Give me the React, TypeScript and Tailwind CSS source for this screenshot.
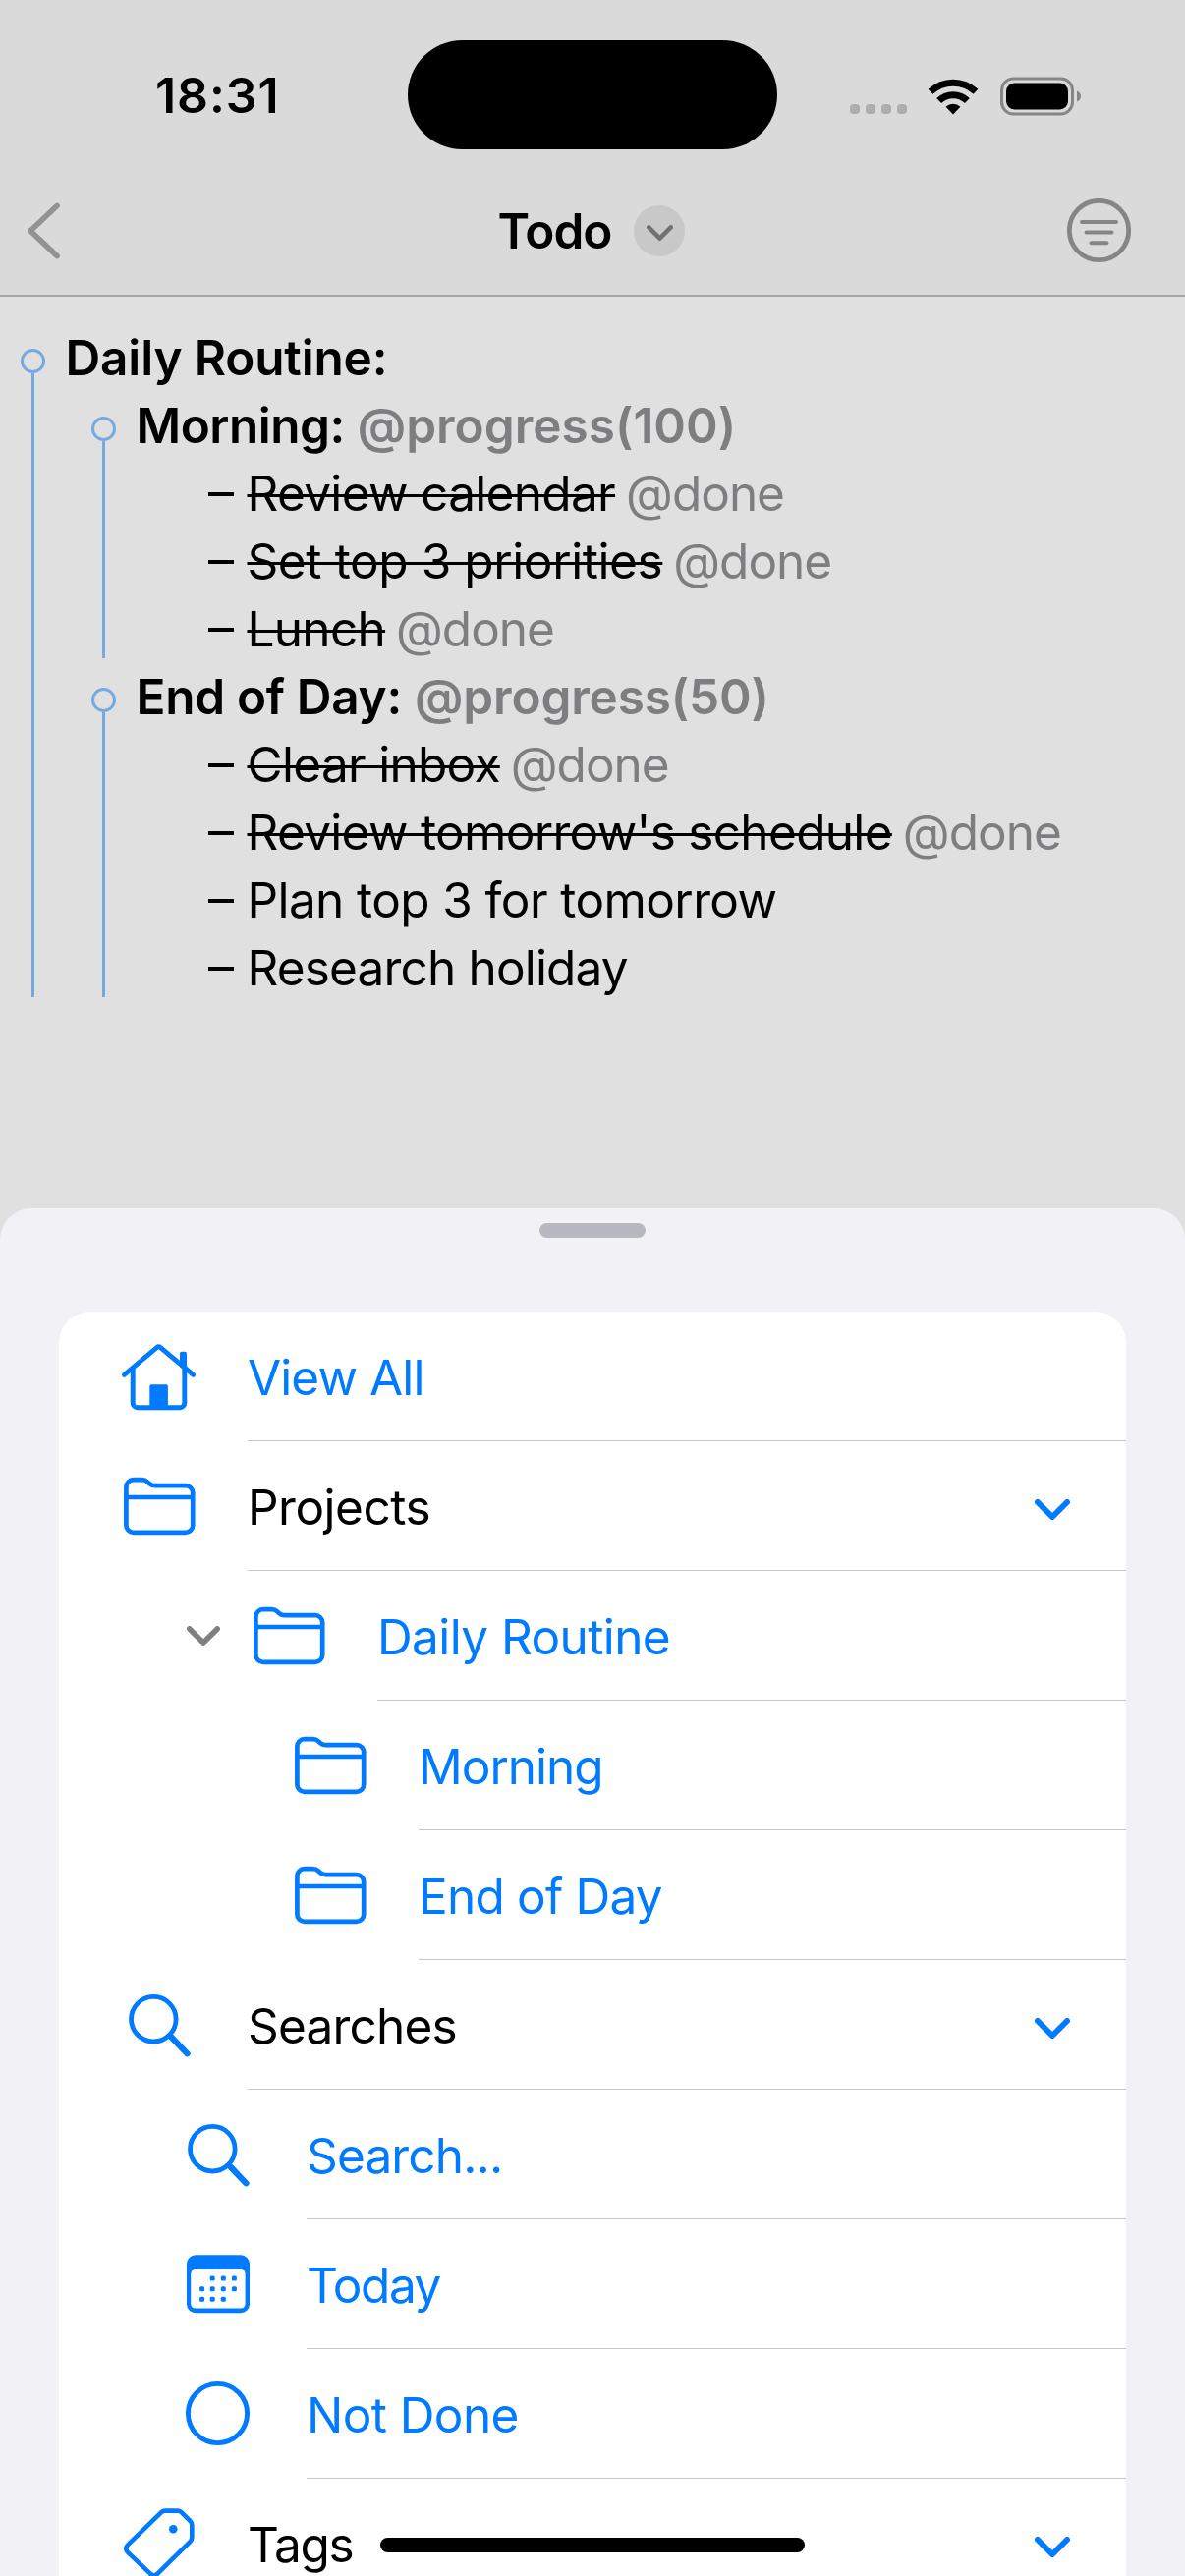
import type { ReactNode } from "react";

type Task = {
  text: string;
  done?: boolean;
  tracking: string;
};

type Section = {
  title: string;
  titleTracking: string;
  progress: string;
  progressTracking: string;
  tasks: Task[];
};

const sections: Section[] = [
  {
    title: "Morning:",
    titleTracking: "tracking-[-0.5px]",
    progress: "@progress(100)",
    progressTracking: "tracking-[0px]",
    tasks: [
      { text: "Review calendar", done: true, tracking: "tracking-[-0.67px]" },
      { text: "Set top 3 priorities", done: true, tracking: "tracking-[-0.4px]" },
      { text: "Lunch", done: true, tracking: "tracking-[-0.7px]" },
    ],
  },
  {
    title: "End of Day:",
    titleTracking: "tracking-[-0.3px]",
    progress: "@progress(50)",
    progressTracking: "tracking-[-0.15px]",
    tasks: [
      { text: "Clear inbox", done: true, tracking: "tracking-[-0.7px]" },
      { text: "Review tomorrow's schedule", done: true, tracking: "tracking-[-0.68px]" },
      { text: "Plan top 3 for tomorrow", tracking: "tracking-[-0.6px]" },
      { text: "Research holiday", tracking: "tracking-[-0.84px]" },
    ],
  },
];

function Chevron({ className }: { className: string }) {
  return (
    <svg viewBox="0 0 36 21" fill="none" stroke="currentColor" strokeWidth="6" strokeLinecap="round" strokeLinejoin="round" className={className}>
      <path d="M3 3l15 15 15-15" />
    </svg>
  );
}

function HouseIcon() {
  return (
    <svg viewBox="0 0 80 80" fill="none" stroke="currentColor" strokeWidth="4.9" strokeLinecap="round" strokeLinejoin="round" className="size-20">
      <path d="M4.4 38.4L37.6 10.6q1.9-1.6 3.8 0L74.6 38.4" />
      <path d="M13.2 32v35.2a4.5 4.5 0 0 0 4.5 4.5h43.6a4.5 4.5 0 0 0 4.5-4.5V32" />
      <path d="M30.3 71V50a1.8 1.8 0 0 1 1.8-1.8h15a1.8 1.8 0 0 1 1.8 1.8v21z" fill="currentColor" stroke="none" />
      <path d="M61 30V16.5a1.8 1.8 0 0 1 1.8-1.8h3.4a1.8 1.8 0 0 1 1.8 1.8V36z" fill="currentColor" stroke="none" />
    </svg>
  );
}

function FolderIcon() {
  return (
    <svg viewBox="0 0 80 80" fill="none" stroke="currentColor" strokeWidth="4.7" strokeLinejoin="round" className="size-20">
      <path d="M6.4 59.5V20.5a7.3 7.3 0 0 1 7.3-7.3h8.8q3.2 0 5.5 2l2.2 2q2.3 2 5.5 2h31.2a7.3 7.3 0 0 1 7.3 7.3v33a7.3 7.3 0 0 1-7.3 7.3H13.7a7.3 7.3 0 0 1-7.3-7.3z" />
      <path d="M6.4 31h67.8" />
    </svg>
  );
}

function SearchIcon() {
  return (
    <svg viewBox="0 0 80 80" fill="none" stroke="currentColor" strokeLinecap="round" className="size-20">
      <circle cx="34.3" cy="34.2" r="22.8" strokeWidth="4.8" />
      <path d="M51.5 51.5l17 17.8" strokeWidth="6.2" />
    </svg>
  );
}

const calendarDots = [
  [34.2, 34], [45.3, 34], [56.4, 34],
  [23.6, 44.7], [34.2, 44.7], [45.3, 44.7], [56.4, 44.7],
  [23.6, 55.3], [34.2, 55.3], [45.3, 55.3],
];

function CalendarIcon() {
  return (
    <svg viewBox="0 0 80 80" fill="currentColor" className="size-20">
      <rect x="8" y="10.3" width="64" height="58.9" rx="9" />
      <rect x="12.2" y="24.9" width="55.4" height="39.6" rx="4.5" fill="#fff" />
      {calendarDots.map(([x, y]) => (
        <rect key={`${x}-${y}`} x={x - 2.5} y={y - 2.5} width="5" height="5" rx="1.5" />
      ))}
    </svg>
  );
}

function CircleIcon() {
  return (
    <svg viewBox="0 0 80 80" fill="none" stroke="currentColor" strokeWidth="4.9" className="size-20">
      <circle cx="39.5" cy="39.5" r="30.1" />
    </svg>
  );
}

function TagIcon() {
  return (
    <svg viewBox="0 0 80 80" fill="none" stroke="currentColor" strokeWidth="4.6" strokeLinejoin="round" className="size-20">
      <path d="M42.2 8.2q1.6-1.6 4-1.6H58.6q2.4 0 4 1.6L71.6 17.2q1.7 1.6 1.7 4V33.8q0 2.4-1.7 4L38.4 70.6q-3.8 3.6-7.4 0L8 48.8q-3.6-3.8 0-7.4z" />
      <circle cx="54.3" cy="25.3" r="4.3" fill="currentColor" stroke="none" />
    </svg>
  );
}

type MenuItem = {
  label: string;
  icon: ReactNode;
  indent: string;
  tracking: string;
  heading?: boolean;
  disclosure?: boolean;
};

const menu: MenuItem[] = [
  { label: "View All", icon: <HouseIcon />, indent: "pl-[62px]", tracking: "tracking-[-0.9px]" },
  { label: "Projects", icon: <FolderIcon />, indent: "pl-[62px]", tracking: "tracking-[-0.5px]", heading: true },
  { label: "Daily Routine", icon: <FolderIcon />, indent: "pl-[130px]", tracking: "tracking-[-0.6px]", disclosure: true },
  { label: "Morning", icon: <FolderIcon />, indent: "pl-[236px]", tracking: "tracking-[-1px]" },
  { label: "End of Day", icon: <FolderIcon />, indent: "pl-[236px]", tracking: "tracking-[-0.8px]" },
  { label: "Searches", icon: <SearchIcon />, indent: "pl-[62px]", tracking: "tracking-[-0.8px]", heading: true },
  { label: "Search...", icon: <SearchIcon />, indent: "pl-[122px]", tracking: "tracking-[-0.85px]" },
  { label: "Today", icon: <CalendarIcon />, indent: "pl-[122px]", tracking: "tracking-[-1.4px]" },
  { label: "Not Done", icon: <CircleIcon />, indent: "pl-[122px]", tracking: "tracking-[-0.6px]" },
  { label: "Tags", icon: <TagIcon />, indent: "pl-[62px]", tracking: "tracking-[-1.3px]", heading: true },
];

function StatusBar() {
  return (
    <div className="flex h-[174px] pt-[41px]">
      <div className="flex h-[111px] w-[415px] items-center pt-0.5 pl-[158px] text-[50px] font-semibold tracking-[0.9px]">18:31</div>
      <div className="h-[111px] w-[376px] rounded-full bg-black" />
      <div className="flex h-[111px] items-center pt-0.5 pl-[74px]">
        <div className="mt-[27px] flex gap-1.5">
          {[0, 1, 2, 3].map((dot) => (
            <span key={dot} className="size-2.5 rounded-[4px] bg-[#adadad]" />
          ))}
        </div>
        <svg viewBox="0 0 52 38" fill="none" stroke="#000" className="ml-[21px] h-[38px] w-[52px]">
          <path d="M3 14.3a33.5 33.5 0 0 1 46 0" strokeWidth="7" />
          <path d="M11.6 23.6a20.5 20.5 0 0 1 28.8 0" strokeWidth="7" />
          <path d="M26 37.6l-7.4-7.8a10.8 10.8 0 0 1 14.8 0z" fill="#000" stroke="none" />
        </svg>
        <svg viewBox="0 0 84 40" className="ml-[21px] h-10 w-[84px]">
          <rect x="2.5" y="2" width="72" height="36" rx="12" fill="none" stroke="#868686" strokeWidth="3" />
          <rect x="7" y="6.5" width="63" height="27" rx="8.5" />
          <path d="M79 14.5q4 1.5 4 5.5t-4 5.5z" fill="#868686" />
        </svg>
      </div>
    </div>
  );
}

function NavBar() {
  return (
    <div className="flex h-[128px] items-start justify-between border-b-2 border-[#a3a3a5] pr-[54px] pl-[27px]">
      <svg viewBox="0 0 36 60" fill="none" stroke="#929292" strokeWidth="5.8" strokeLinecap="round" strokeLinejoin="round" className="mt-[31px] h-[60px] w-9">
        <path d="M31 4.5L4 30l27 25.5" />
      </svg>
      <div className="ml-[55px] flex h-[122px] items-center gap-[23px]">
        <span className="text-[49.5px] font-semibold tracking-[-1px]">Todo</span>
        <span className="flex size-[52px] items-center justify-center rounded-full bg-[#c8c8c8]">
          <Chevron className="mt-1 h-4 w-[27px] text-[#717171]" />
        </span>
      </div>
      <svg viewBox="0 0 66 66" fill="none" stroke="#858585" strokeLinecap="round" className="mt-[28px] size-[66px]">
        <circle cx="32.5" cy="32.5" r="30.2" strokeWidth="4.8" />
        <path d="M15 24h35M19.5 34.5h26M24.5 45.2h16" strokeWidth="4" />
      </svg>
    </div>
  );
}

function Rail() {
  return (
    <div className="flex w-[45.5px] shrink-0 flex-col pt-[25px] pb-[5px]">
      <span className="size-[25px] rounded-full border-3 border-[#76a9e0]" />
      <span className="ml-[11px] w-[3px] flex-1 bg-[#76a9e0]" />
    </div>
  );
}

function TaskLine({ task }: { task: Task }) {
  return (
    <div className="flex h-[69px] items-center whitespace-pre pl-[73px]">
      <span className="flex w-[40px]"><span className="mt-[1px] h-[4.5px] w-[26px] bg-black" /></span>
      <span className={task.tracking}>
        {task.done ? <s className="decoration-[3px]">{task.text}</s> : task.text}
      </span>
      {task.done && <span className="ml-[11px] tracking-[-1px] text-[#7e7e80]">@done</span>}
    </div>
  );
}

function Outline() {
  return (
    <div className="flex h-[928px] items-start pt-[28px] pl-[21px] text-[49.5px]">
      <div className="flex">
        <Rail />
        <div>
          <div className="flex h-[69px] items-center font-semibold tracking-[-0.15px]">Daily Routine:</div>
          {sections.map((section) => (
            <div key={section.title} className="flex pl-[26.5px]">
              <Rail />
              <div>
                <div className="flex h-[69px] items-center font-semibold">
                  <span className={section.titleTracking}>{section.title}</span>
                  <span className={`ml-[13px] text-[#7e7e80] ${section.progressTracking}`}>{section.progress}</span>
                </div>
                {section.tasks.map((task) => (
                  <TaskLine key={task.text} task={task} />
                ))}
              </div>
            </div>
          ))}
        </div>
      </div>
    </div>
  );
}

function MenuRow({ item }: { item: MenuItem }) {
  return (
    <div className={`flex h-[132px] items-center text-[#007aff] ${item.indent}`}>
      {item.disclosure && <Chevron className="mr-[30px] h-5 w-[34px] text-[#808080]" />}
      {item.icon}
      <div className="ml-[50px] flex h-full flex-1 items-center justify-between border-b border-[#c6c6c8] pt-[3px] pr-[57px]">
        <span className={`${item.tracking} ${item.heading ? "text-black" : ""}`}>{item.label}</span>
        {item.heading && <Chevron className="mt-1 h-[21px] w-9" />}
      </div>
    </div>
  );
}

export default function App() {
  return (
    <div className="relative h-[2622px] w-[1206px] overflow-hidden bg-[#e0e0e0] font-['Inter',sans-serif] text-black">
      <header className="bg-[#dadada]">
        <StatusBar />
        <NavBar />
      </header>
      <Outline />
      <section className="h-[1392px] rounded-t-[32px] bg-[#f1f1f6] px-[60px] pt-[15px]">
        <div className="mx-auto h-[15px] w-[108px] rounded-full bg-[#b8b8c0]" />
        <div className="mt-[75px] rounded-t-[32px] bg-white text-[49.5px]">
          {menu.map((item) => (
            <MenuRow key={item.label} item={item} />
          ))}
        </div>
      </section>
      {/* home indicator floats over the sheet */}
      <div className="absolute bottom-6 left-[387px] h-[15px] w-[432px] rounded-full bg-black" />
    </div>
  );
}
